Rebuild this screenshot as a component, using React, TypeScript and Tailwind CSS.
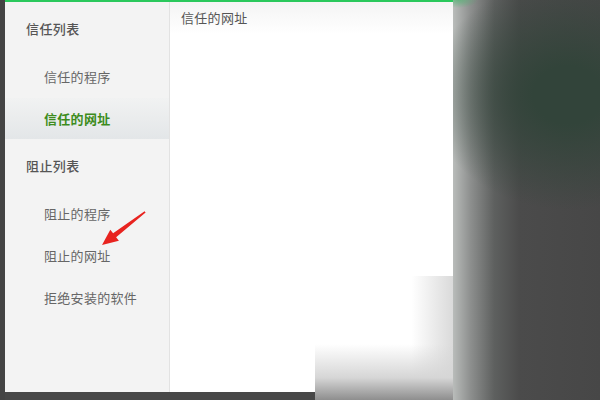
import React from "react";

const font = { fontFamily: '"Noto Sans CJK SC", "Noto Sans", sans-serif' };

type Item = { label: string; active?: boolean };

const groups: { title: string; items: Item[] }[] = [
  {
    title: "信任列表",
    items: [{ label: "信任的程序" }, { label: "信任的网址", active: true }],
  },
  {
    title: "阻止列表",
    items: [{ label: "阻止的程序" }, { label: "阻止的网址" }, { label: "拒绝安装的软件" }],
  },
];

function Sidebar() {
  return (
    <aside className="w-[165px] shrink-0 border-r border-[#e2e2e2] bg-[#f3f3f3]">
      {groups.map((g) => (
        <div key={g.title}>
          <div className="flex h-[54px] items-center pl-[21px] text-[13px] font-medium tracking-[0.4px] text-[#555]">
            {g.title}
          </div>
          {g.items.map((it) => (
            <div
              key={it.label}
              className={
                it.active
                  ? "flex h-[41px] items-center bg-[linear-gradient(to_bottom,#f1f2f2,#e3e6e8)] pl-[39px] text-[13px] font-bold tracking-[0.3px] text-[#3d8c1d]"
                  : "flex h-[42px] items-center pl-[39px] text-[13px] tracking-[0.3px] text-[#666]"
              }
            >
              {it.label}
            </div>
          ))}
        </div>
      ))}
    </aside>
  );
}

export default function App() {
  return (
    <div
      className="relative flex h-[400px] w-[600px] overflow-hidden bg-[#474747]"
      style={font}
    >
      <div className="w-[5px] shrink-0 bg-[#444]" />
      <div className="flex h-[392px] w-[448px] shrink-0 flex-col border-t-2 border-[#2ac85c] bg-white">
        <div className="flex flex-1">
          <Sidebar />
          <main className="flex-1 bg-white">
            <div className="flex h-[32px] items-center bg-[linear-gradient(to_bottom,#f4f4f4,#ffffff)] pl-[11px] text-[13px] tracking-[0.3px] text-[#555]">
              信任的网址
            </div>
          </main>
        </div>
      </div>
      <div className="flex-1 bg-[radial-gradient(ellipse_20px_8px_at_5px_0px,rgba(60,180,100,0.6),rgba(60,180,100,0)),radial-gradient(ellipse_140px_115px_at_115px_95px,#32443a_25%,rgba(50,68,58,0)),linear-gradient(to_right,#b9bcba,#8d8f8e_12%,#5e605f_28%,#4b4b4b_45%,#474747)]" />

      {/* watermark patch */}
      <div className="absolute left-[315px] top-[276px] h-[124px] w-[138px] bg-[linear-gradient(to_bottom,rgba(255,255,255,0)_55%,#d6d6d6_82%,#8e8e8e),linear-gradient(to_right,#ffffff_70%,#dadada)]" />

      <svg className="pointer-events-none absolute left-0 top-0" width="600" height="400">
        <polygon
          points="102,245 110.3,229.7 113.1,233.3 144.6,211.2 145.6,212.6 116.1,237.2 118.9,240.7"
          fill="#e8231f"
        />
      </svg>
    </div>
  );
}
